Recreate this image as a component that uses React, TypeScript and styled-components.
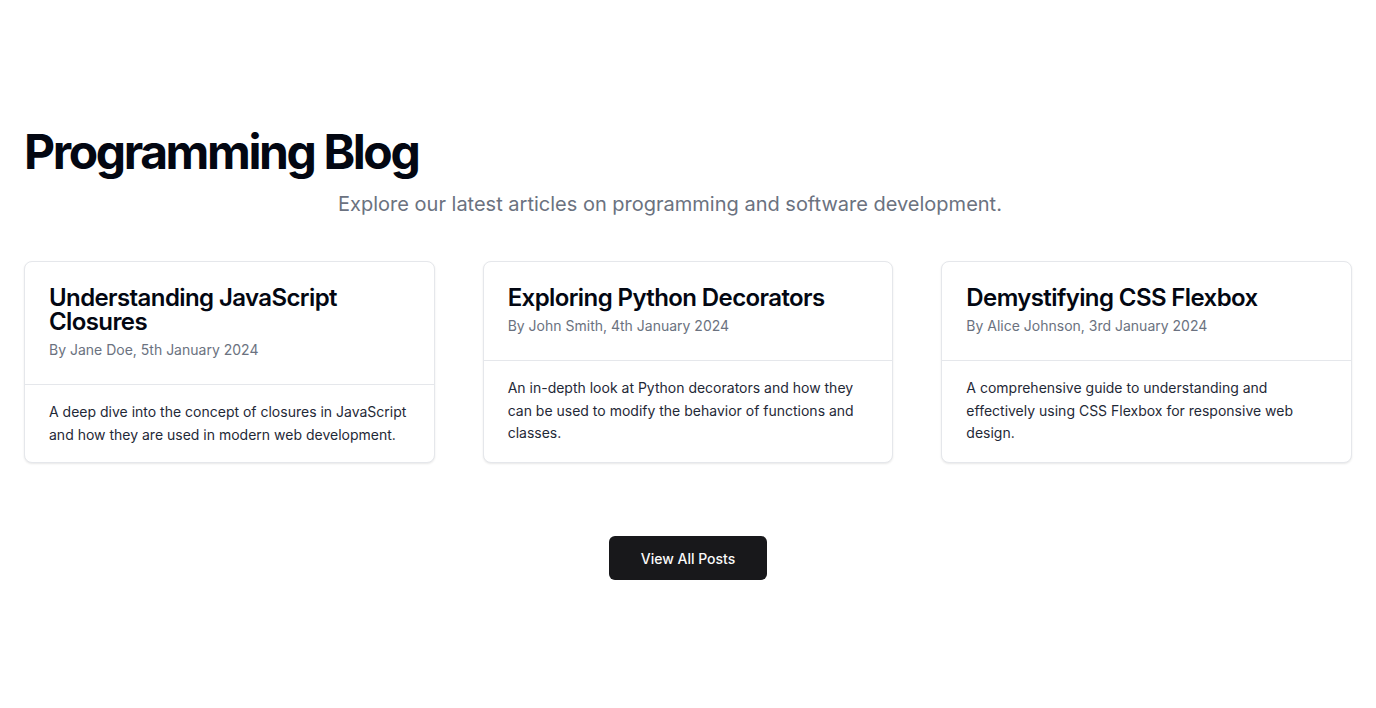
import React from "react";
import styled, { createGlobalStyle } from "styled-components";

const GlobalStyle = createGlobalStyle`
  * { box-sizing: border-box; }
  html, body { margin: 0; padding: 0; background: #ffffff; }
  body {
    font-family: Inter, "Noto Sans", "Liberation Sans", sans-serif;
    color: #09090b;
    -webkit-font-smoothing: antialiased;
  }
`;

const Page = styled.main`
  padding: 128px 24px 48px;
  display: flex;
  flex-direction: column;
`;

const Header = styled.header`
  display: flex;
  flex-direction: column;
  gap: 14px;
`;

const Title = styled.h1`
  margin: 0;
  font-size: 48px;
  line-height: 48px;
  font-weight: 700;
  letter-spacing: -0.05em;
  color: #030712;
`;

const Subtitle = styled.p`
  margin: 0 36px 0 0;
  text-align: center;
  font-size: 20px;
  line-height: 28px;
  color: #6b7280;
`;

const Grid = styled.section`
  margin-top: 43px;
  display: grid;
  grid-template-columns: repeat(3, 1fr);
  gap: 48px;
`;

const Card = styled.article`
  border: 1px solid #e5e7eb;
  border-radius: 8px;
  background: #fff;
  box-shadow: 0 1px 2px 0 rgba(0, 0, 0, 0.06), 0 1px 3px 0 rgba(0, 0, 0, 0.04);
  display: flex;
  flex-direction: column;
`;

const CardHeader = styled.div`
  padding: 24px;
  display: flex;
  flex-direction: column;
  gap: 6px;
  border-bottom: 1px solid #e5e7eb;
`;

const CardTitle = styled.h2`
  margin: 0;
  font-size: 24px;
  line-height: 24px;
  font-weight: 600;
  letter-spacing: -0.025em;
  color: #030712;
`;

const Meta = styled.p`
  margin: 0;
  font-size: 14px;
  line-height: 20px;
  color: #6b7280;
`;

const CardBody = styled.div`
  padding: 16px 24px 16px;
`;

const Excerpt = styled.p`
  margin: 0;
  font-size: 14px;
  line-height: 22.6px;
  color: #1f2937;
`;

const Footer = styled.div`
  margin-top: 73px;
  display: flex;
  justify-content: center;
`;

const Button = styled.button`
  height: 44px;
  padding: 0 32px;
  border: none;
  border-radius: 6px;
  background: #18181b;
  color: #fafafa;
  font-family: inherit;
  font-size: 14px;
  font-weight: 500;
  cursor: pointer;
`;

const posts = [
  {
    title: "Understanding JavaScript Closures",
    meta: "By Jane Doe, 5th January 2024",
    excerpt:
      "A deep dive into the concept of closures in JavaScript and how they are used in modern web development.",
  },
  {
    title: "Exploring Python Decorators",
    meta: "By John Smith, 4th January 2024",
    excerpt:
      "An in-depth look at Python decorators and how they can be used to modify the behavior of functions and classes.",
  },
  {
    title: "Demystifying CSS Flexbox",
    meta: "By Alice Johnson, 3rd January 2024",
    excerpt:
      "A comprehensive guide to understanding and effectively using CSS Flexbox for responsive web design.",
  },
];

export default function App() {
  return (
    <>
      <GlobalStyle />
      <Page>
        <Header>
          <Title>Programming Blog</Title>
          <Subtitle>Explore our latest articles on programming and software development.</Subtitle>
        </Header>
        <Grid>
          {posts.map((p) => (
            <Card key={p.title}>
              <CardHeader>
                <CardTitle>{p.title}</CardTitle>
                <Meta>{p.meta}</Meta>
              </CardHeader>
              <CardBody>
                <Excerpt>{p.excerpt}</Excerpt>
              </CardBody>
            </Card>
          ))}
        </Grid>
        <Footer>
          <Button>View All Posts</Button>
        </Footer>
      </Page>
    </>
  );
}
